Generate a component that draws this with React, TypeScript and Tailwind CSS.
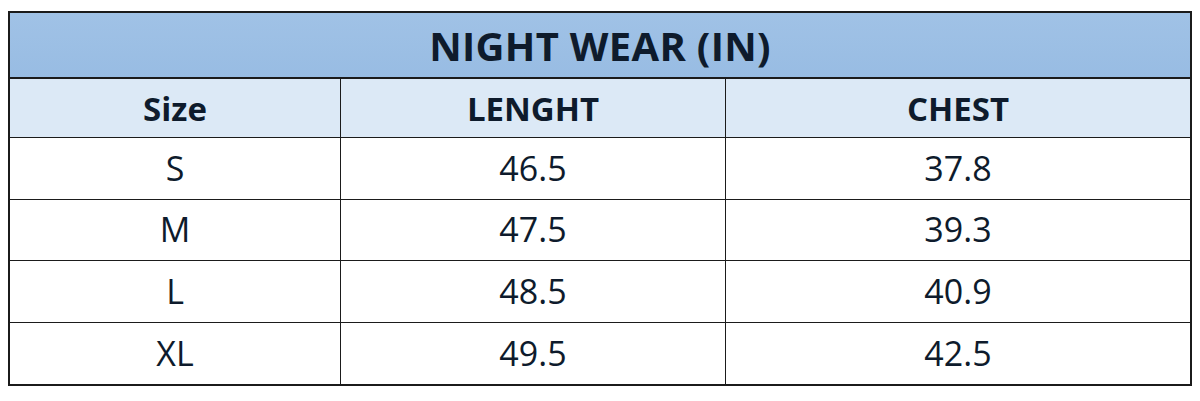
import React from "react";

const rows = [
  ["S", "46.5", "37.8"],
  ["M", "47.5", "39.3"],
  ["L", "48.5", "40.9"],
  ["XL", "49.5", "42.5"],
];

export default function App() {
  return (
    <div
      className="w-[1200px] h-[401px] bg-white pt-[11px] pl-[8px]"
      style={{ fontFamily: '"Open Sans", "Noto Sans", sans-serif' }}
    >
      <div className="w-[1184px] border-2 border-[#1b1b1b] text-[#0e1b2c]">
        <div className="h-[66px] flex items-center justify-center bg-gradient-to-b from-[#a0c2e6] to-[#98bce3] border-b-2 border-[#1b1b1b]">
          <span className="text-[40px] font-bold leading-none tracking-[0.3px] pt-[2px]">NIGHT WEAR (IN)</span>
        </div>
        <div className="grid grid-cols-[331px_385px_1fr] h-[59px] bg-[#dce9f6] border-b-[1.5px] border-[#1b1b1b]">
          <div className="flex items-center justify-center pt-[2px] border-r-[1.5px] border-[#1b1b1b] text-[33px] font-bold">Size</div>
          <div className="flex items-center justify-center pt-[2px] border-r-[1.5px] border-[#1b1b1b] text-[33px] font-bold">LENGHT</div>
          <div className="flex items-center justify-center pt-[2px] text-[33px] font-bold">CHEST</div>
        </div>
        {rows.map((r, i) => (
          <div
            key={i}
            className={
              i < rows.length - 1
                ? "grid grid-cols-[331px_385px_1fr] h-[61.5px] border-b-[1.5px] border-[#1b1b1b]"
                : "grid grid-cols-[331px_385px_1fr] h-[61px]"
            }
          >
            <div className="flex items-center justify-center border-r-[1.5px] border-[#1b1b1b] text-[34px]">{r[0]}</div>
            <div className="flex items-center justify-center border-r-[1.5px] border-[#1b1b1b] text-[34px]">{r[1]}</div>
            <div className="flex items-center justify-center text-[34px]">{r[2]}</div>
          </div>
        ))}
      </div>
    </div>
  );
}
